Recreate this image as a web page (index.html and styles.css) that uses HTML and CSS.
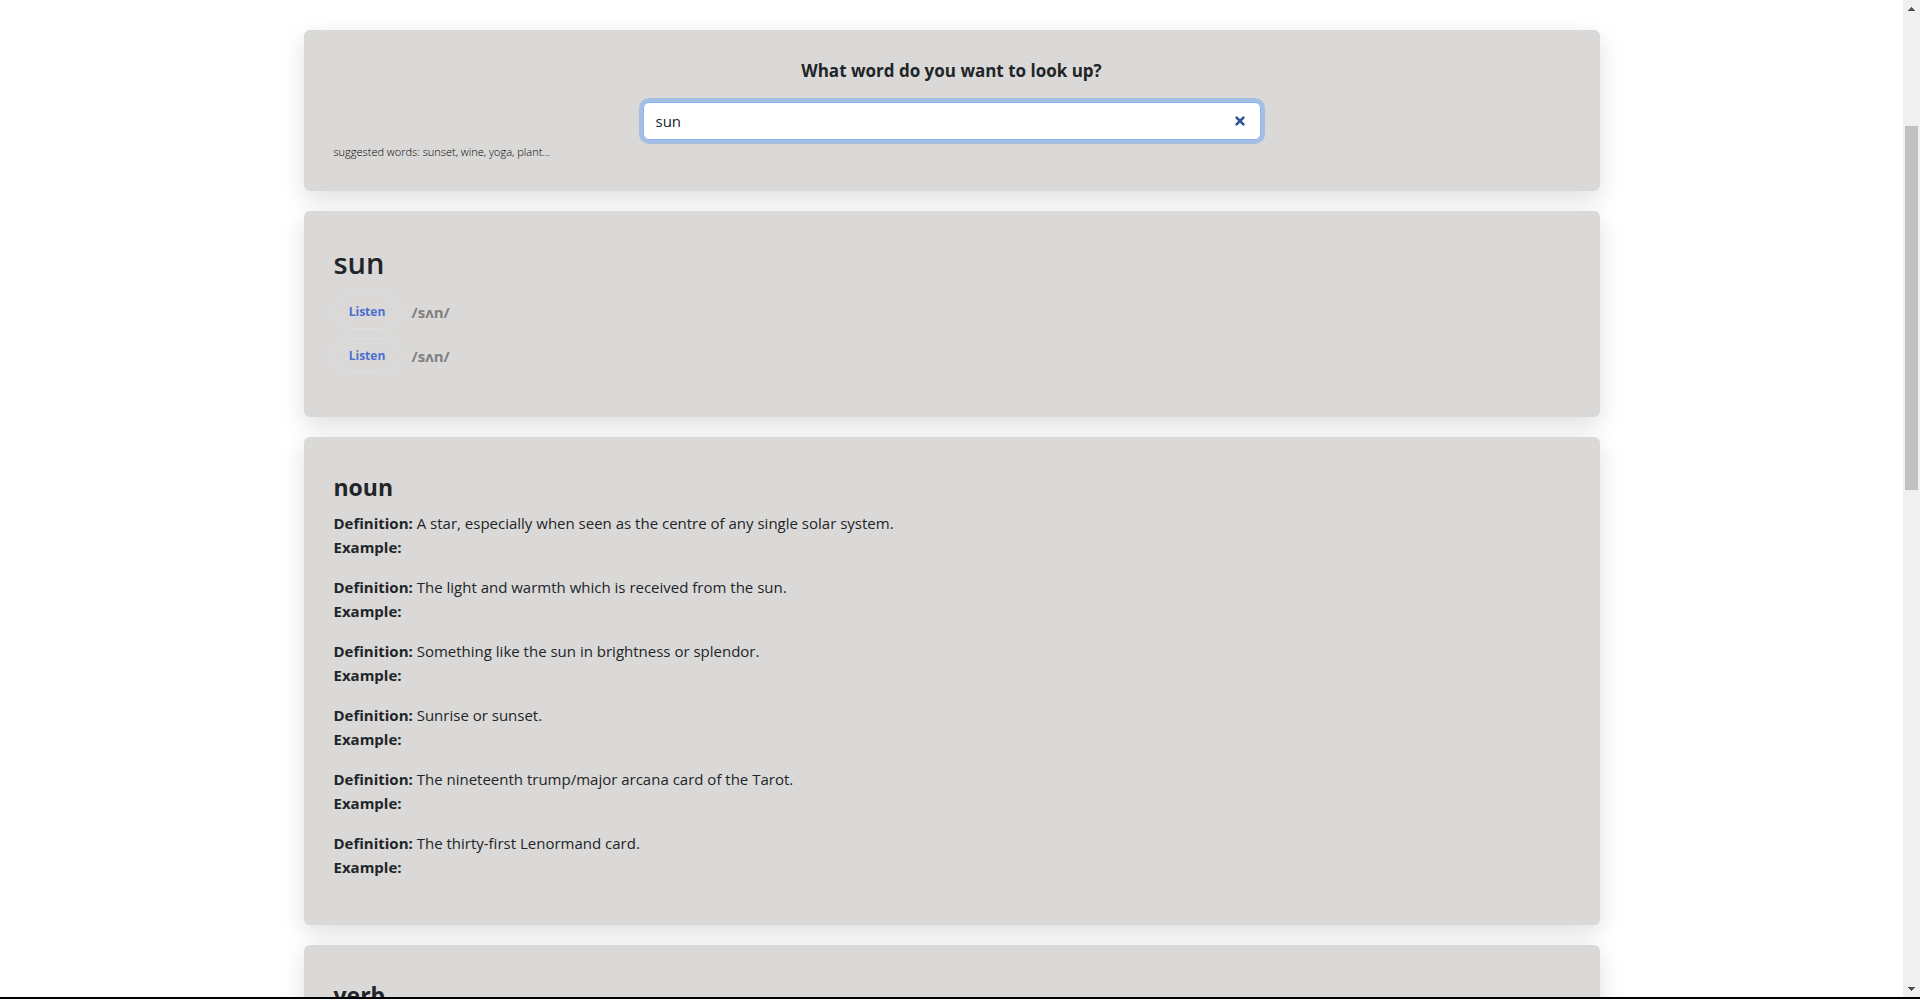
FILE: index.html
```html
<!DOCTYPE html>
<html lang="en">
<head>
<meta charset="utf-8">
<title>Dictionary</title>
<link rel="stylesheet" href="styles.css">
</head>
<body>
<div class="viewport">
  <main class="page">
    <div class="container">
      <section class="card search">
        <form class="search-form">
          <label class="search-title" for="keyword">What word do you want to look up?</label>
          <div class="search-box">
            <input class="search-input" id="keyword" type="text" value="sun" autocomplete="off">
            <button class="clear" type="reset" aria-label="Clear">
              <svg width="10" height="10" viewBox="0 0 10 10"><path d="M1.6 1.6 8.4 8.4M8.4 1.6 1.6 8.4" stroke="#2f5596" stroke-width="2.6" stroke-linecap="round" fill="none"/></svg>
            </button>
          </div>
        </form>
        <p class="hint">suggested words: sunset, wine, yoga, plant...</p>
      </section>

      <section class="card word">
        <h1 class="word-title">sun</h1>
        <div class="phonetic"><button class="listen" type="button">Listen</button><span class="ipa">/sʌn/</span></div>
        <div class="phonetic"><button class="listen" type="button">Listen</button><span class="ipa">/sʌn/</span></div>
      </section>

      <section class="card">
        <h2 class="part">noun</h2>
        <p class="meaning"><strong>Definition:</strong> A star, especially when seen as the centre of any single solar system.<br><strong>Example:</strong></p>
        <p class="meaning"><strong>Definition:</strong> The light and warmth which is received from the sun.<br><strong>Example:</strong></p>
        <p class="meaning"><strong>Definition:</strong> Something like the sun in brightness or splendor.<br><strong>Example:</strong></p>
        <p class="meaning"><strong>Definition:</strong> Sunrise or sunset.<br><strong>Example:</strong></p>
        <p class="meaning"><strong>Definition:</strong> The nineteenth trump/major arcana card of the Tarot.<br><strong>Example:</strong></p>
        <p class="meaning"><strong>Definition:</strong> The thirty-first Lenormand card.<br><strong>Example:</strong></p>
      </section>

      <section class="card">
        <h2 class="part">verb</h2>
      </section>
    </div>
  </main>
  <div class="scrollbar" aria-hidden="true">
    <svg class="arrow" width="7" height="4" viewBox="0 0 7 4" shape-rendering="crispEdges"><path d="M3 0h1v1h1v1h1v1h1v1H0V3h1V2h1V1h1z" fill="#505050"/></svg>
    <div class="track"><div class="thumb"></div></div>
    <svg class="arrow" width="7" height="4" viewBox="0 0 7 4" shape-rendering="crispEdges"><path d="M0 0h7v1H6v1H5v1H4v1H3V3H2V2H1V1H0z" fill="#505050"/></svg>
  </div>
</div>
</body>
</html>
```
FILE: styles.css
```css
*, *::before, *::after {
  box-sizing: border-box;
}

body {
  margin: 0;
  background: #fff;
  color: #212529;
  font-family: "Segoe UI", "Open Sans", "Noto Sans", sans-serif;
  font-size: 15px;
  line-height: 24px;
}

.viewport {
  display: flex;
  height: 100vh;
  overflow: hidden;
  border-bottom: 2px solid #000;
}

.page {
  flex: 1;
  min-width: 0;
  overflow: hidden;
}

.container {
  max-width: 1320px;
  margin: 0 auto;
  padding: 30px 12px 0;
}

.card {
  margin-bottom: 20px;
  padding: 30px;
  border-radius: 6px;
  background: #dad9d7;
  box-shadow: 0 8px 24px rgba(0, 0, 0, 0.13);
}

.search-form {
  display: flex;
  flex-direction: column;
  align-items: center;
}

.search-title {
  margin-bottom: 20px;
  font-size: 17px;
  line-height: 22px;
  font-weight: 700;
}

.search-box {
  position: relative;
  width: 50%;
}

.search-input {
  display: block;
  width: 100%;
  height: 38px;
  padding: 6px 12px;
  border: 1px solid #86b7fe;
  border-radius: 6px;
  outline: 0;
  background: #fff;
  box-shadow: 0 0 0 4px rgba(13, 110, 253, 0.25);
  color: #212529;
  font: inherit;
}

.clear {
  position: absolute;
  top: 0;
  right: 12px;
  display: flex;
  align-items: center;
  justify-content: center;
  width: 18px;
  height: 38px;
  padding: 0;
  border: 0;
  background: none;
}

.hint {
  margin: 3px 0 0;
  color: #000;
  font-size: 11px;
  line-height: 18px;
  font-weight: 300;
}

.word-title {
  margin: 0 0 12px;
  padding-top: 2px;
  font-size: 29px;
  line-height: 39px;
  font-weight: 600;
}

.phonetic {
  display: flex;
  align-items: center;
  gap: 11px;
  margin-bottom: 9px;
}

.phonetic:last-child {
  margin-bottom: 14px;
}

.listen {
  width: 67px;
  height: 35px;
  padding: 0;
  border: 1px solid #dedede;
  border-radius: 18px;
  background: none;
  color: #4d6fd0;
  font-family: inherit;
  font-size: 12px;
  font-weight: 700;
}

.ipa {
  color: #808080;
  font-weight: 700;
}

.part {
  margin: 0;
  padding: 4px 0 8px;
  font-size: 23px;
  line-height: 32px;
  font-weight: 700;
}

.meaning {
  margin: 0 0 16px;
}

.scrollbar {
  display: flex;
  flex-direction: column;
  align-items: center;
  width: 17px;
  padding: 7px 2px 6px;
  background: #f0f0f0;
}

.arrow {
  display: block;
}

.track {
  display: flex;
  flex: 1;
  flex-direction: column;
  width: 13px;
}

.track::before {
  flex: 0 0 11.8%;
  content: "";
}

.thumb {
  flex: 0 0 37.3%;
  background: #c1c1c1;
}
```
